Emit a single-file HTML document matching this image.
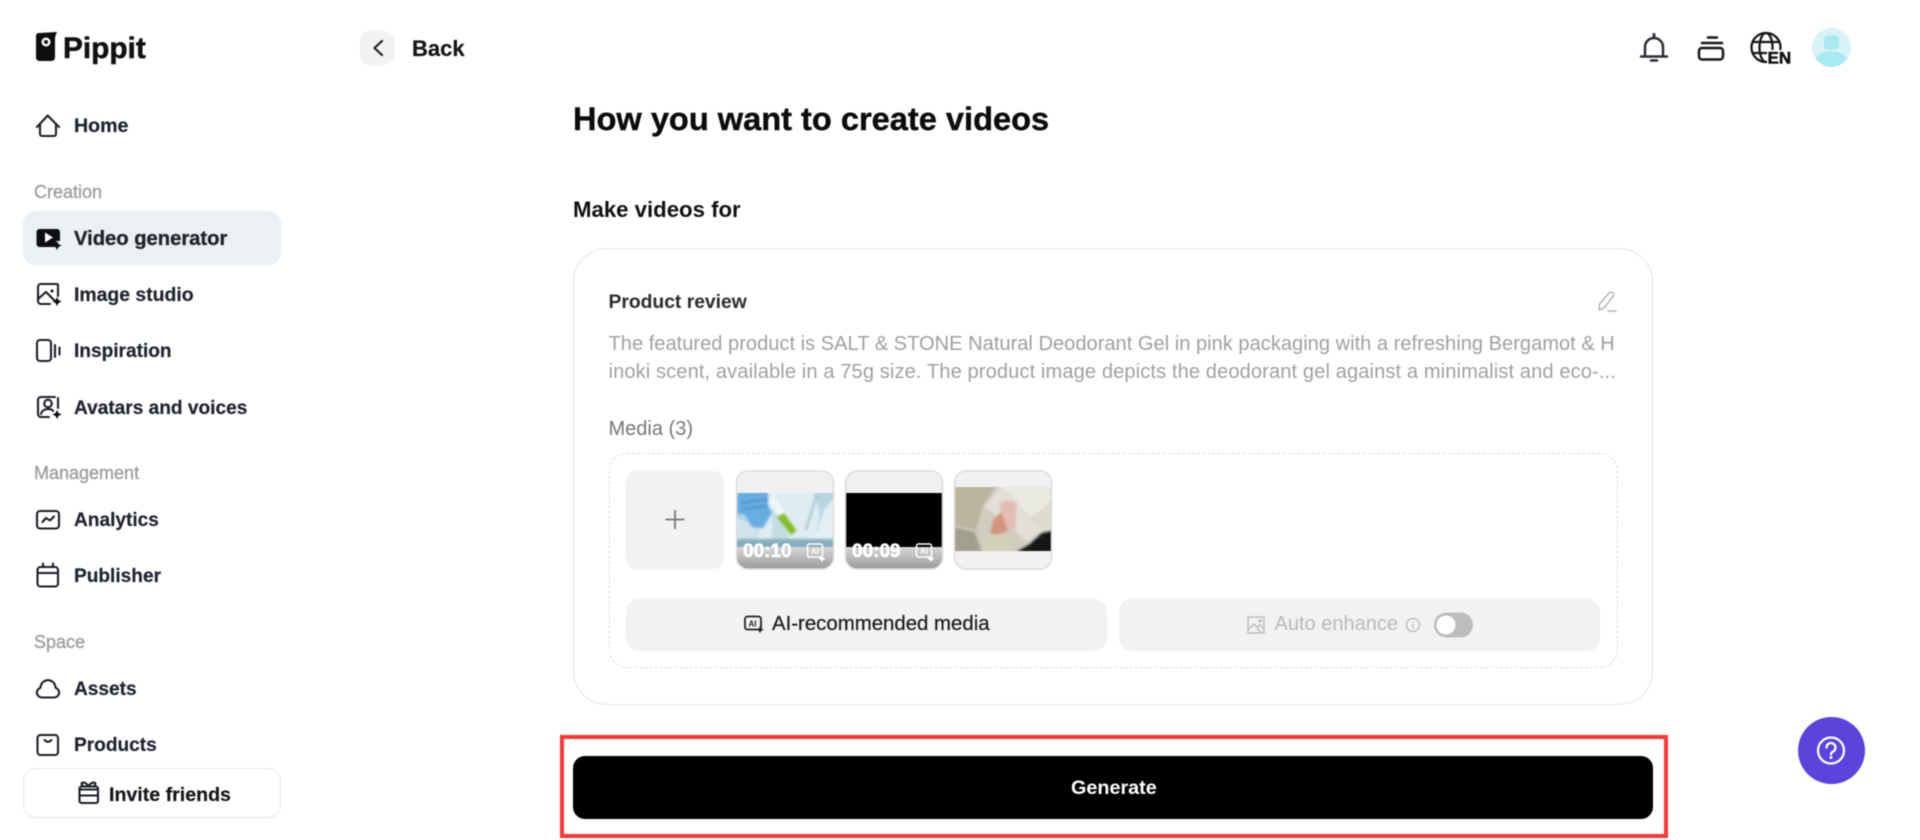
<!DOCTYPE html>
<html lang="en"><head><meta charset="utf-8"><title>Pippit</title>
<style>
html,body{margin:0;padding:0;background:#fff}
body{width:1920px;height:840px;overflow:hidden;position:relative;font-family:"Liberation Sans",sans-serif;color:#1b1f2a}
#w{position:absolute;inset:0;filter:blur(.45px)}
.t{position:absolute;white-space:nowrap;line-height:30px;height:30px}
.n{left:74px;font-size:19.1px;font-weight:700;color:#20242f;-webkit-text-stroke:.2px #20242f}
.s{left:34px;font-size:18px;color:#a0a0a5;-webkit-text-stroke:.4px #a0a0a5}
.b{position:absolute;box-sizing:border-box}
svg{position:absolute;left:0;top:0}
</style></head><body><div id="w">
<div class="b" style="left:23px;top:211px;width:258px;height:54px;background:#ebf0f3;border-radius:13px"></div>
<div class="b" style="left:23px;top:768px;width:258px;height:50px;border:1.5px solid #e6e6e8;border-radius:13px"></div>
<div class="b" style="left:360px;top:31px;width:34px;height:34px;background:#f2f2f2;border-radius:10px"></div>
<div class="b" style="left:573px;top:248px;width:1080px;height:457px;border:1.5px solid #e4e4e6;border-radius:34px"></div>
<div class="b" style="left:609px;top:453px;width:1009px;height:215px;border:1.2px dashed #dcdcde;border-radius:18px"></div>
<div class="b" style="left:626px;top:471px;width:98px;height:98px;background:#f2f2f2;border-radius:11px"></div>
<div class="b" style="left:626px;top:599px;width:481px;height:52px;background:#f2f2f2;border-radius:13px"></div>
<div class="b" style="left:1119px;top:599px;width:481px;height:52px;background:#f2f2f2;border-radius:13px"></div>
<div class="b" style="left:560px;top:735px;width:1108px;height:103px;border:4.5px solid #ff3535"></div>
<div class="b" style="left:573px;top:756px;width:1080px;height:63px;background:#000;border-radius:12px"></div>
<div class="b" style="left:1798px;top:717px;width:67px;height:67px;background:#5b43dc;border-radius:50%"></div>

<div class="t" style="left:63px;top:34px;font-size:29.8px;font-weight:700;color:#111;-webkit-text-stroke:.5px #111">Pippit</div>
<div class="t" style="left:412px;top:34px;font-size:22px;font-weight:700;color:#15151a;-webkit-text-stroke:.2px #15151a">Back</div>
<div class="t n" style="top:111px;font-size:19.6px">Home</div>
<div class="t s" style="top:177px">Creation</div>
<div class="t n" style="top:224px;font-size:20.2px;-webkit-text-stroke:.35px #20242f">Video generator</div>
<div class="t n" style="top:280px;font-size:19.4px">Image studio</div>
<div class="t n" style="top:337px">Inspiration</div>
<div class="t n" style="top:393.5px">Avatars and voices</div>
<div class="t s" style="top:458px">Management</div>
<div class="t n" style="top:506px">Analytics</div>
<div class="t n" style="top:562px">Publisher</div>
<div class="t s" style="top:627px">Space</div>
<div class="t n" style="top:675px">Assets</div>
<div class="t n" style="top:731px">Products</div>
<div class="t" style="left:109px;top:780px;font-size:19.6px;font-weight:700;color:#15151a;-webkit-text-stroke:.2px #15151a">Invite friends</div>

<div class="t" style="left:573px;top:104px;font-size:32.6px;font-weight:700;color:#0c0c0f;-webkit-text-stroke:.4px #0c0c0f">How you want to create videos</div>
<div class="t" style="left:573px;top:195px;font-size:22.2px;font-weight:700;color:#111">Make videos for</div>
<div class="t" style="left:608.5px;top:288px;font-size:19.3px;font-weight:700;color:#2b2b30">Product review</div>
<div class="t" style="left:608.5px;top:329px;font-size:20.1px;color:#a0a0a4">The featured product is SALT &amp; STONE Natural Deodorant Gel in pink packaging with a refreshing Bergamot &amp; H</div>
<div class="t" style="left:608.5px;top:357px;font-size:20.1px;letter-spacing:.1px;color:#a0a0a4">inoki scent, available in a 75g size. The product image depicts the deodorant gel against a minimalist and eco-...</div>
<div class="t" style="left:608.5px;top:414px;font-size:20px;color:#77777c">Media (3)</div>

<svg width="1920" height="840" viewBox="0 0 1920 840" fill="none">
<defs>
<clipPath id="c1"><rect x="737" y="471.500" width="96" height="97" rx="11"/></clipPath>
<clipPath id="c2"><rect x="846" y="471.500" width="96" height="97" rx="11"/></clipPath>
<clipPath id="c3"><rect x="955" y="471.500" width="96" height="97" rx="11"/></clipPath>
<clipPath id="i1"><rect x="737" y="493" width="96" height="54"/></clipPath>
<clipPath id="i3"><rect x="955" y="487" width="96" height="64"/></clipPath>
<linearGradient id="g" x1="0" y1="0" x2="0" y2="1"><stop offset="0" stop-color="#d6d6d6"/><stop offset="1" stop-color="#9a9a9a"/></linearGradient>
</defs>
<!-- logo -->
<path d="M36 36 Q36 33 39 33 L57 32 Q55.500 35 55 38 V57 Q55 61 51 61 H40 Q36 61 36 57 Z" fill="#0e0e10"/>
<circle cx="46" cy="42" r="4.500" fill="#fff"/><circle cx="46" cy="42" r="2" fill="#0e0e10"/>
<path d="M382 41 L374.500 48 L382 55" stroke="#222" stroke-width="2.200" stroke-linecap="round" stroke-linejoin="round"/>
<g stroke="#1c1f28" stroke-width="2.100" stroke-linecap="round" stroke-linejoin="round">
<path d="M37 127 L47.700 115.500 L59 127 M40 124 V134 a2 2 0 0 0 2 2 H54 a2 2 0 0 0 2-2 V124"/>
<path d="M57 284 H41 a3 3 0 0 0-3 3 V301 a3 3 0 0 0 3 3 H50 M58 284.500 V296 M38 299 L46 292 L54 300"/>
<rect x="37" y="340" width="14" height="21" rx="3"/>
<path d="M55 345 V357 M59.500 347.500 V354.500"/>
<path d="M55 397 H41 a3 3 0 0 0-3 3 V414 a3 3 0 0 0 3 3 H49 M58 398 V408 M41 414 C42 408 52 408 53 411"/>
<circle cx="48" cy="403.500" r="3.800"/>
<rect x="37" y="511" width="22" height="17.500" rx="3"/>
<path d="M42.500 522 L46 518 L50 520.500 L54 516.500"/>
<rect x="37.500" y="567" width="20.500" height="19.500" rx="3"/>
<path d="M37.500 573 H58 M43 563.500 V566.500 M53 563.500 V566.500"/>
<path d="M42 697.500 H54 a5 5 0 0 0 1.500-9.800 a7.500 7.500 0 0 0-15 0 a5 5 0 0 0 1.500 9.800 Z"/>
<rect x="37.500" y="735" width="20.500" height="20" rx="3"/>
<path d="M44.500 740 Q48 743.500 51.500 740"/>
<path d="M79.500 789.500 H98 V801 a2 2 0 0 1-2 2 H81.500 a2 2 0 0 1-2-2 Z M79.500 789.500 v-1 a2 2 0 0 1 2-2 H96 a2 2 0 0 1 2 2 v1 M79.500 795.500 H98 M88.500 786 C84 780 79 783 83 786 M88.500 786 C93 780 98 783 94 786"/>
</g>
<g fill="#0e0f14">
<path d="M36.500 232 a3 3 0 0 1 3-3 H57 a3 3 0 0 1 3 3 V241 H56 V247 H39.500 a3 3 0 0 1-3-3 Z"/>
<path d="M57 241 l1.500 3 3 1.500-3 1.500-1.500 3-1.500-3-3-1.500 3-1.500Z"/>
<path d="M57 297 l1.500 3 3 1.500-3 1.500-1.500 3-1.500-3-3-1.500 3-1.500Z"/>
<path d="M57 410 l1.500 3 3 1.500-3 1.500-1.500 3-1.500-3-3-1.500 3-1.500Z"/>
<circle cx="52" cy="291" r="1.500"/>
</g>
<path d="M45 232.500 L53 237.500 L45 242.500 Z" fill="#fff"/>

<!-- top right -->
<g stroke="#2c2d34" stroke-width="2.500" stroke-linecap="round">
<path d="M1645 56 V47 a9 9 0 0 1 18 0 V56 M1641 56.500 H1667 M1651 60.500 H1657"/>
<path d="M1654 34.500 V36" stroke-width="3"/>
</g>
<g stroke="#17171c" stroke-width="2.500" stroke-linecap="round" stroke-linejoin="round">
<path d="M1708 37.500 H1717 M1702 43 H1722"/>
<rect x="1699" y="48" width="24" height="11.500" rx="3"/>
</g>
<g stroke="#17171c" stroke-width="2.300">
<circle cx="1766" cy="47.500" r="14.500"/>
<ellipse cx="1766" cy="47.500" rx="6.500" ry="14.500"/>
<path d="M1752 42 H1780 M1752 53 H1780"/>
</g>
<rect x="1767" y="50" width="27" height="16" fill="#fff"/>
<text x="1767.500" y="63.500" font-family="Liberation Sans" font-size="17" font-weight="700" fill="#111" stroke="#111" stroke-width=".5">EN</text>
<circle cx="1831.500" cy="47.500" r="19.500" fill="#d8f3f7"/>
<path d="M1816 58.500 C1820 49 1843 49 1847 58.500 C1843 64 1837 67 1831.500 67 C1826 67 1820 64 1816 58.500Z" fill="#a9e9f2"/>
<rect x="1824" y="35.500" width="15" height="14" rx="3" fill="#a9e9f2"/>

<!-- edit -->
<g stroke="#b5b5b8" stroke-width="1.500" stroke-linecap="round" stroke-linejoin="round" transform="translate(-2,-5)">
<path d="M1601 315 L1601.500 309 L1611 298 a2.500 2.500 0 0 1 4 3.500 L1606 313 Z M1610 316 H1618"/>
</g>
<!-- plus -->
<path d="M675 510 V529 M665.500 519.500 H684.500" stroke="#77777a" stroke-width="1.800"/>

<!-- thumb 1 -->
<g clip-path="url(#c1)">
<rect x="737" y="471" width="96" height="98" fill="#f0f0f0"/>
<g clip-path="url(#i1)"><g style="filter:blur(1.2px)">
<rect x="730" y="490" width="110" height="62" fill="#b4d5e1"/>
<path d="M768 490 H812 L820 512 L815 540 H752 L760 525Z" fill="#dfedf2"/>
<path d="M730 516 L762 526 L757 540 H730Z" fill="#cfe3eb"/>
<path d="M824 510 L840 490 V540 H814 Z" fill="#e3eff3"/>
<path d="M816 497 L806 530" stroke="#9fbfcc" stroke-width="2"/>
<path d="M772 510 Q785 525 790 540 H772Z" fill="#c5dce5"/>
<rect x="730" y="539" width="110" height="14" fill="#86aebd"/>
<path d="M738 490 H768 L768 505 L772 513 L763 528 L752 527 L744 514 H737 V497Z" fill="#68ade2"/>
<path d="M742 503 L768 499 M742 509 L768 506" stroke="#3f8ac5" stroke-width="1.500"/>
<path d="M773 495 L799 532 L794 536 L768 500Z" fill="#eef6f8"/>
<path d="M777 517 L784 513 L797 531 L791 535Z" fill="#82bd2a"/>
</g></g>
<rect x="737" y="547" width="96" height="22" fill="url(#g)"/>
</g>
<!-- thumb 2 -->
<g clip-path="url(#c2)">
<rect x="846" y="471" width="96" height="98" fill="#f0f0f0"/>
<rect x="846" y="493" width="96" height="54" fill="#000"/>
<rect x="846" y="547" width="96" height="22" fill="url(#g)"/>
</g>
<!-- thumb 3 -->
<g clip-path="url(#c3)">
<rect x="955" y="471" width="96" height="98" fill="#f0f0f0"/>
<g clip-path="url(#i3)"><g style="filter:blur(1.2px)">
<rect x="950" y="482" width="106" height="74" fill="#cfccc0"/>
<path d="M950 482 H998 L982 508 L976 530 L950 524Z" fill="#bab59f"/>
<path d="M998 482 H1056 V497 L1030 520 Z" fill="#e9e8e1"/>
<path d="M1032 520 L1056 496 V532 L1042 536Z" fill="#dddccf"/>
<path d="M984 506 L1002 486 L1042 530 L1028 542Z" fill="#e2dfd6"/>
<path d="M1000 503 Q1010 498 1017 504 L1015 529 L1002 529 Z" fill="#e3bcb2"/>
<path d="M993 520 L1001 512 L1008 531 L990 537Z" fill="#d3957b"/>
<path d="M978 556 L989 534 L1008 534 L1010 556Z" fill="#d3d0b9"/>
<path d="M1010 556 L1030 544 L1042 533 L1056 530 V556Z" fill="#161616"/>
<path d="M950 526 L975 532 L983 556 H950Z" fill="#a29f8e"/>
</g></g>
</g>
<g stroke="#dcdcdc" stroke-width="1.500">
<rect x="736.500" y="471" width="97" height="98" rx="11.500"/>
<rect x="845.500" y="471" width="97" height="98" rx="11.500"/>
<rect x="954.500" y="471" width="97" height="98" rx="11.500"/>
</g>
<g font-family="Liberation Sans" font-size="19" font-weight="700" fill="#fff" stroke="#fff" stroke-width=".6">
<text x="743" y="557">00:10</text><text x="852" y="557">00:09</text>
</g>
<g stroke="#fff" stroke-width="1.500" fill="none">
<rect x="807.500" y="544" width="15" height="13" rx="2"/>
<rect x="916.500" y="544" width="15" height="13" rx="2"/>
</g>
<g font-family="Liberation Sans" font-size="8" font-weight="700" fill="#fff">
<text x="811" y="554">AI</text><text x="920" y="554">AI</text>
</g>
<path d="M822 555 l1.200 2.500 2.500 1.200-2.500 1.200-1.200 2.500-1.200-2.500-2.500-1.200 2.500-1.200Z M931 555 l1.200 2.500 2.500 1.200-2.500 1.200-1.200 2.500-1.200-2.500-2.500-1.200 2.500-1.200Z" fill="#fff"/>

<!-- AI icon -->
<rect x="745" y="616.500" width="16" height="13" rx="2.500" stroke="#222" stroke-width="1.800"/>
<text x="748.500" y="626.500" font-family="Liberation Sans" font-size="8" font-weight="700" fill="#222">AI</text>
<path d="M760 626 l1.200 2.500 2.500 1.200-2.500 1.200-1.200 2.500-1.200-2.500-2.500-1.200 2.500-1.200Z" fill="#222"/>
<!-- auto enhance -->
<g stroke="#bdbdbd" stroke-width="1.500" stroke-linejoin="round">
<rect x="1248" y="617" width="16" height="16" rx="1"/>
<path d="M1248 630 L1254 624 L1261 633 M1257 627 L1260 625 L1264 629"/>
<circle cx="1260" cy="621" r="1"/>
<circle cx="1413" cy="625" r="6.500"/>
<path d="M1413 624 V628.500 M1413 621.500 V622.500"/>
</g>
<rect x="1434" y="612.500" width="39" height="25" rx="12.500" fill="#bdbdbd"/>
<circle cx="1446" cy="625" r="9.500" fill="#fff"/>
<!-- help -->
<circle cx="1831" cy="750.500" r="13" stroke="#fff" stroke-width="2.300"/>
<path d="M1826.500 747.500 a4.500 4.500 0 1 1 6.800 3.900 c-1.400 .8-2.300 1.700-2.300 3" stroke="#fff" stroke-width="2.300" stroke-linecap="round"/>
<circle cx="1831" cy="757.500" r="1.500" fill="#fff"/>
</svg>

<div class="t" style="left:772px;top:609px;font-size:20.4px;color:#1c1d22;-webkit-text-stroke:.25px #1c1d22">AI-recommended media</div>
<div class="t" style="left:1274.5px;top:609px;font-size:20px;color:#b9b9bb">Auto enhance</div>
<div class="t" style="left:1071px;top:773px;font-size:19.8px;font-weight:700;color:#fff">Generate</div>
</div></body></html>
